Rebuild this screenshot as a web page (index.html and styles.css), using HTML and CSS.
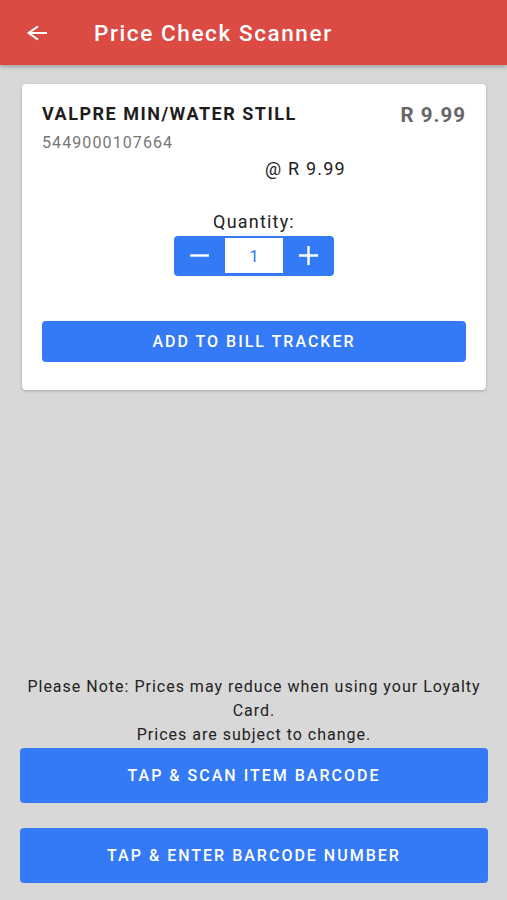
FILE: index.html
```html
<!DOCTYPE html>
<html lang="en">
  <head>
    <meta charset="UTF-8" />
    <meta name="viewport" content="width=device-width, initial-scale=1.0" />
    <title>Price Check Scanner</title>
    <link rel="stylesheet" href="styles.css">
  </head>
  <body>
    <header class="app-bar">
      <button class="back-btn" aria-label="Back">
        <svg width="30" height="22" viewBox="0 0 24 24" preserveAspectRatio="none">
          <path d="M20 11H7.83l5.59-5.59L12 4l-8 8 8 8 1.41-1.41L7.83 13H20v-2z" fill="#fff" />
        </svg>
      </button>
      <h1>Price Check Scanner</h1>
    </header>

    <main class="content">
      <div class="item-card">
        <div class="item-head">
          <div>
            <h2 class="item-name">VALPRE MIN/WATER STILL</h2>
            <p class="item-code">5449000107664</p>
          </div>
          <span class="item-total">R 9.99</span>
        </div>
        <p class="unit-price">@ R 9.99</p>

        <div class="qty">
          <label>Quantity:</label>
          <div class="stepper">
            <button class="step-btn" aria-label="Decrease">
              <svg width="21" height="21" viewBox="0 0 21 21">
                <path d="M1 10.5h19" stroke="#fff" stroke-width="2.4" />
              </svg>
            </button>
            <span class="step-value">1</span>
            <button class="step-btn" aria-label="Increase">
              <svg width="21" height="21" viewBox="0 0 21 21">
                <path d="M1 10.5h19M10.5 1v19" stroke="#fff" stroke-width="2.4" />
              </svg>
            </button>
          </div>
        </div>

        <button class="btn btn-add">ADD TO BILL TRACKER</button>
      </div>
    </main>

    <footer class="bottom">
      <p class="note">Please Note: Prices may reduce when using your Loyalty Card.<br />Prices are subject to change.</p>
      <button class="btn btn-big">TAP &amp; SCAN ITEM BARCODE</button>
      <button class="btn btn-big">TAP &amp; ENTER BARCODE NUMBER</button>
    </footer>
  </body>
</html>
```

FILE: styles.css
```css
html,
body {
  height: 100%;
}
body {
  margin: 0;
  font-family: Roboto, "Noto Sans", Arial, sans-serif;
  background-color: #d8d8d8;
  color: #222;
  display: flex;
  flex-direction: column;
}
.app-bar {
  height: 65px;
  flex-shrink: 0;
  background: #db4a43;
  display: flex;
  align-items: center;
  box-shadow: 0 2px 4px rgba(0, 0, 0, 0.25);
}
.back-btn {
  background: none;
  border: none;
  padding: 0;
  margin-left: 22px;
  width: 30px;
  height: 22px;
  display: flex;
}
.app-bar h1 {
  margin: 0 0 0 42px;
  color: #fff;
  font-size: 22.5px;
  font-weight: 500;
  letter-spacing: 1.6px;
}
.content {
  flex: 1;
  padding: 19px 21px 0 22px;
}
.item-card {
  background: #fff;
  border-radius: 4px;
  box-shadow: 0 1px 3px rgba(0, 0, 0, 0.25);
  padding: 18px 20px 28px;
}
.item-head {
  display: flex;
  justify-content: space-between;
}
.item-name {
  margin: 0;
  font-size: 18px;
  font-weight: 700;
  color: #1d1d1d;
  line-height: 24px;
  letter-spacing: 1.5px;
}
.item-code {
  margin: 7px 0 0;
  font-size: 16px;
  color: #777;
  line-height: 20px;
  letter-spacing: 1.1px;
}
.item-total {
  font-size: 20.5px;
  font-weight: 700;
  color: #666;
  letter-spacing: 1px;
  line-height: 26px;
}
.unit-price {
  margin: 4px 0 0 223px;
  font-size: 18px;
  line-height: 24px;
  color: #222;
  letter-spacing: 1.2px;
}
.qty {
  display: flex;
  flex-direction: column;
  align-items: center;
  margin-top: 29px;
}
.qty label {
  font-size: 18px;
  line-height: 24px;
  color: #222;
  letter-spacing: 1.2px;
}
.stepper {
  display: flex;
  margin-top: 2px;
  background: #3479f5;
  border-radius: 4px;
  height: 40px;
  padding: 2px 0 3px;
  box-sizing: border-box;
}
.step-btn {
  width: 51px;
  background: none;
  border: none;
  padding: 0;
  display: flex;
  align-items: center;
  justify-content: center;
}
.step-value {
  width: 58px;
  background: #fff;
  color: #3479f5;
  font-size: 17px;
  display: flex;
  align-items: center;
  justify-content: center;
}
.btn {
  display: block;
  width: 100%;
  border: none;
  border-radius: 4px;
  background: #3479f5;
  color: #fff;
  font-family: inherit;
  font-weight: 500;
  letter-spacing: 2px;
  cursor: pointer;
}
.btn-add {
  margin-top: 45px;
  height: 41px;
  font-size: 16px;
}
.bottom {
  flex-shrink: 0;
  padding: 0 19px 17px 20px;
}
.note {
  margin: 0 0 1px;
  text-align: center;
  font-size: 16px;
  line-height: 24px;
  color: #222;
  letter-spacing: 1px;
}
.btn-big {
  height: 55px;
  font-size: 16px;
  margin-bottom: 25px;
}
.btn-big:last-child {
  margin-bottom: 0;
}
```
